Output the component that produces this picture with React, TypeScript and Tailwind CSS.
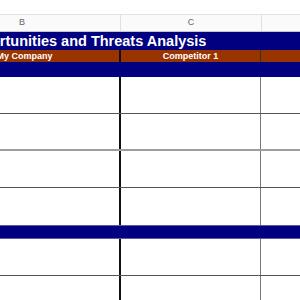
const ROWS_TOP = [
    'border-[#555]',
    'border-[#9e9e9e] border-b-2',
    'border-[#555]',
];

function DataRow({ line, last }: { line: string; last?: boolean }) {
    return (
        <div className={`flex h-[37px] ${last ? '' : `border-b ${line}`}`}>
            <div className="w-[197px] shrink-0 border-r-2 border-[#111]" />
            <div className="w-[140px] shrink-0 border-r border-[#777]" />
            <div className="flex-1" />
        </div>
    );
}

export default function App() {
    return (
        <div className="w-[300px] h-[300px] overflow-hidden bg-white font-['Liberation_Sans',Arial,sans-serif]">
            <div className="ml-[-76px] w-[460px]">
                {/* column letters */}
                <div className="h-[15px] border-b border-[#e3e3e3]" />
                <div className="flex h-[17px] bg-[#fafafa] text-[9px] text-[#666] border-b border-[#c7c7c7]">
                    <div className="w-[197px] shrink-0 border-r border-[#e0e0e0] flex items-center justify-center">B</div>
                    <div className="w-[141px] shrink-0 border-r border-[#e0e0e0] flex items-center justify-center">C</div>
                    <div className="flex-1" />
                </div>

                {/* title */}
                <div className="h-[18px] bg-[#000080] flex items-center">
                    <span className="ml-[38px] whitespace-nowrap text-white font-bold text-[14.5px] leading-none">
                        Opportunities and Threats Analysis
                    </span>
                </div>
                <div className="flex h-[12px] bg-[#993300] text-white font-bold text-[9px] leading-none">
                    <div className="w-[197px] shrink-0 border-r-2 border-[#111] flex items-center justify-center pl-[6px]">My Company</div>
                    <div className="w-[140px] shrink-0 border-r border-[#333] flex items-center justify-center">Competitor 1</div>
                    <div className="flex-1" />
                </div>
                <div className="h-[15px] bg-[#000080]" />

                <DataRow line={ROWS_TOP[0]} />
                <DataRow line={ROWS_TOP[1]} />
                <DataRow line={ROWS_TOP[2]} />
                <DataRow line="" last />

                <div className="h-[14px] bg-[#000080] border-y border-[#5a5aa8]" />

                <DataRow line="border-[#555]" />
                <DataRow line="border-[#555]" />
            </div>
        </div>
    );
}
